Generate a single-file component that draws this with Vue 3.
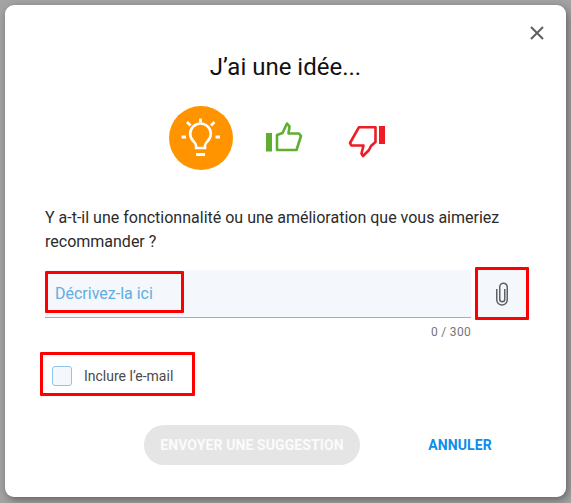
<script setup>
import { ref } from 'vue';

const description = ref('');
const maxLength = 300;
</script>

<template>
  <div class="backdrop">
    <section class="dialog">
      <button class="close" type="button" aria-label="Fermer">
        <svg width="16" height="16" viewBox="0 0 16 16">
          <path d="M2 2l12 12M14 2L2 14" fill="none" stroke="#5f5f5f" stroke-width="2" />
        </svg>
      </button>

      <h2 class="title">J’ai une idée...</h2>

      <div class="moods">
        <span class="mood active">
          <svg width="64" height="64" viewBox="0 0 64 64" fill="none" stroke="#fff">
            <path d="M31.500 12.500v4M18 16l3.500 3.500M45.500 16L42 19.500M12.500 31h4.500M46.500 31H51" stroke-width="2.800" />
            <path d="M27 42v-2.500c0-1.800-1.200-2.800-2.500-4.200a10.300 10.300 0 1 1 14 0c-1.300 1.400-2.500 2.400-2.500 4.200V42z" stroke-width="2.600" />
            <path d="M27 48.500h9" stroke-width="3" />
          </svg>
        </span>
        <span class="mood">
          <svg width="38" height="34" viewBox="0 0 38 34" fill="none">
            <rect x="1" y="12" width="6" height="18.500" fill="#5fae32" />
            <path d="M12 14l5.500-2 4.500-9.500 2.500 3-1 7H34l2 2.500-4.500 14H12z" stroke="#5fae32" stroke-width="2.600" stroke-linejoin="round" />
          </svg>
        </span>
        <span class="mood">
          <svg width="38" height="40" viewBox="0 0 38 40" fill="none">
            <rect x="31" y="8" width="6" height="18" fill="#ee1c25" />
            <path d="M11 9.200H27.500V24L23 28l-2 4-6 6-1.500-2.500 2-8H3.500L2 25z" stroke="#ee1c25" stroke-width="2.600" stroke-linejoin="round" />
          </svg>
        </span>
      </div>

      <p class="question">
        Y a-t-il une fonctionnalité ou une amélioration que vous aimeriez recommander ?
      </p>

      <div class="field-row">
        <div class="field-col">
          <label class="field">
            <input v-model="description" type="text" placeholder="Décrivez-la ici" :maxlength="maxLength" />
            <span class="mark mark-input"></span>
          </label>
          <div class="counter">{{ description.length }} / {{ maxLength }}</div>
        </div>
        <button class="attach" type="button" aria-label="Joindre un fichier">
          <svg width="16" height="24" viewBox="0 0 16 24" fill="none">
            <path d="M10.750 7V17.250a2.500 2.500 0 0 1-5 0V5a3.750 3.750 0 0 1 7.500 0V17.750a5.250 5.250 0 0 1-10.500 0V7" stroke="#5f6368" stroke-width="1.500" />
          </svg>
          <span class="mark mark-attach"></span>
        </button>
      </div>

      <label class="email">
        <input type="checkbox" />
        <span class="box"></span>
        <span>Inclure l’e-mail</span>
        <span class="mark mark-email"></span>
      </label>

      <div class="actions">
        <button class="submit" type="button" disabled>ENVOYER UNE SUGGESTION</button>
        <button class="cancel" type="button">ANNULER</button>
      </div>
    </section>
  </div>
</template>

<style>
html,
body {
  margin: 0;
  background: #a3a3a3;
}
</style>

<style scoped>
.backdrop {
  width: 571px;
  height: 503px;
  box-sizing: border-box;
  padding: 5px;
  background: #a3a3a3;
  font-family: Roboto, "Liberation Sans", sans-serif;
  overflow: hidden;
}

.dialog {
  position: relative;
  box-sizing: border-box;
  width: 561px;
  height: 492px;
  padding: 48px 40px 0;
  border-radius: 9px;
  background: #fff;
  box-shadow: 2px 3px 8px rgba(0, 0, 0, 0.4);
}

.close {
  position: absolute;
  top: 20px;
  right: 21px;
  display: flex;
  padding: 0;
  border: 0;
  background: none;
}

.title {
  margin: 0;
  font-size: 24px;
  font-weight: 400;
  line-height: 28px;
  text-align: center;
  color: #111;
}

.moods {
  display: flex;
  justify-content: center;
  gap: 19px;
  margin-top: 25px;
  margin-left: -3px;
}

.mood {
  display: flex;
  align-items: center;
  justify-content: center;
  width: 64px;
  height: 64px;
  border-radius: 50%;
}

.mood.active {
  background: #ff9300;
}

.question {
  margin: 36px 0 0;
  font-size: 16px;
  line-height: 24px;
  color: #2b2b2b;
}

.field-row {
  display: flex;
  gap: 4px;
  margin-top: 16px;
}

.field-col {
  flex: none;
  width: 426px;
}

.field {
  position: relative;
  display: block;
  height: 48px;
  box-sizing: border-box;
  border-bottom: 1px solid #7db8de;
  border-radius: 4px 4px 0 0;
  background: #f4f8fc;
}

.field input {
  width: 100%;
  height: 100%;
  box-sizing: border-box;
  padding: 0 10px;
  border: 0;
  outline: 0;
  background: transparent;
  font: 400 16px Roboto, sans-serif;
}

.field input::placeholder {
  color: #62ace0;
  opacity: 1;
}

.counter {
  margin-top: 7px;
  font-size: 12px;
  line-height: 14px;
  letter-spacing: 0.3px;
  text-align: right;
  color: #757575;
}

.attach {
  position: relative;
  flex: none;
  display: flex;
  align-items: center;
  justify-content: center;
  width: 54px;
  height: 53px;
  margin-top: -3px;
  padding: 0;
  border: 0;
  background: #f4f8fc;
}

.email {
  position: relative;
  display: flex;
  align-items: center;
  gap: 12px;
  width: max-content;
  margin: 27px 0 0 7px;
  font-size: 14px;
  line-height: 20px;
  color: #4a4a4a;
}

.email input {
  position: absolute;
  opacity: 0;
}

.box {
  width: 20px;
  height: 20px;
  box-sizing: border-box;
  border: 1px solid #8fc4e8;
  border-radius: 3px;
  background: #f4f8fc;
}

.actions {
  display: flex;
  align-items: center;
  gap: 36px;
  margin: 39px 0 0 99px;
}

.submit {
  width: 216px;
  height: 40px;
  padding: 0;
  border: 0;
  border-radius: 20px;
  background: #e5e5e5;
  color: #fbfbfb;
  font: 700 14px Roboto, sans-serif;
  letter-spacing: 0.1px;
}

.cancel {
  width: 128px;
  padding: 0;
  border: 0;
  background: none;
  color: #0d8ee9;
  font: 700 14px Roboto, sans-serif;
  letter-spacing: 0.1px;
}

/* red review marks lying over the form */
.mark {
  position: absolute;
  box-sizing: border-box;
  border: 3px solid #f00;
  border-radius: 1px;
  pointer-events: none;
}

.mark-input {
  left: 0;
  top: 1px;
  width: 139px;
  height: 42px;
}

.mark-attach {
  inset: 0;
}

.mark-email {
  left: -12px;
  top: -14px;
  width: 155px;
  height: 44px;
}
</style>
